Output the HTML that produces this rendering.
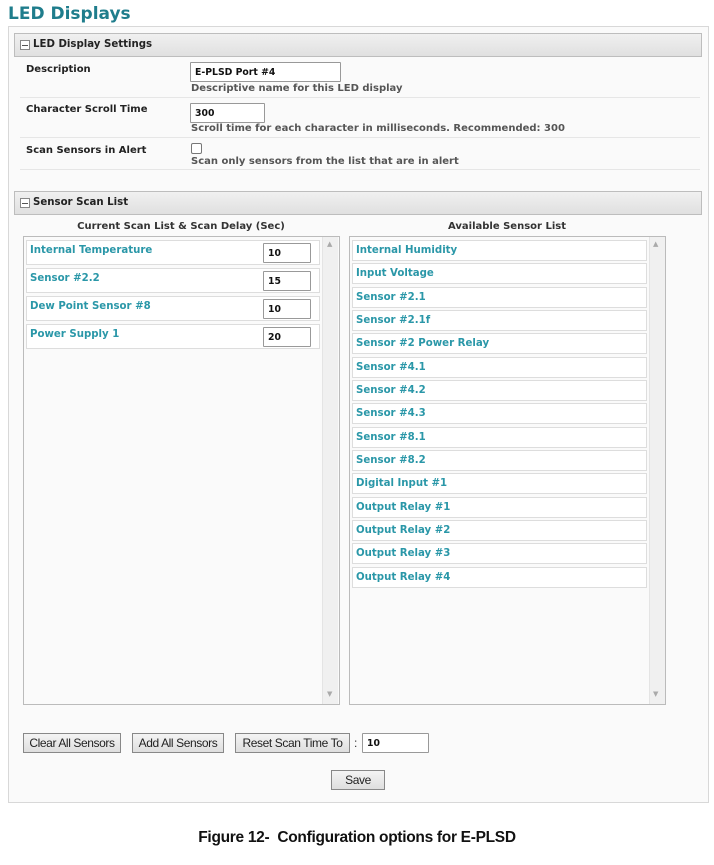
<!DOCTYPE html>
<html><head><meta charset="utf-8"><style>
*{box-sizing:border-box;margin:0;padding:0}
body{width:714px;height:865px;background:#fff;position:relative;font-family:"DejaVu Sans",Verdana,sans-serif;font-weight:bold;font-size:9.3px;color:#333;overflow:hidden}
.a{position:absolute}
.title{left:8px;top:4px;font-size:17px;color:#1f7d8c}
.outer{left:8px;top:26px;width:701px;height:777px;border:1px solid #d8d8d8;background:#fafafa}
.hdr{height:24px;left:14px;width:688px;border:1px solid #bdbdbd;background:linear-gradient(#f0f0f0,#e0e0e0);font-size:10.2px;color:#222;padding:5px 0 0 18px}
.hdr i{position:absolute;left:5px;top:6px;width:10px;height:10px;border:1px solid #888;background:#fff}
.hdr i:after{content:"";position:absolute;left:1px;right:1px;top:4px;height:1px;background:#555}
.lbl{left:26px;color:#222;font-size:10px}
.help{left:191px;color:#555;font-size:10px}
.inp{border:1px solid #999;background:#fff;height:20px;font-size:9.3px;padding:4px 0 0 4px;color:#111;border-radius:1px}
.sep{left:20px;width:680px;height:1px;background:#e6e6e6}
.box{border:1px solid #bbb;background:#fafafa}
.sb{width:16px;background:#f0f0f0;border-left:1px solid #e4e4e4}
.it{border:1px solid #ddd;background:#fff;color:#2a97a8;padding:4px 0 0 3px;font-size:10.2px}
.btn{border:1px solid #888;background:linear-gradient(#f4f4f4,#dedede);height:20px;font-family:"Liberation Sans",Arial,sans-serif;font-weight:normal;font-size:12px;color:#222;padding:2px 0 0 0;text-align:center;letter-spacing:-0.4px}
.arr{font-size:7px;color:#aaa;font-weight:normal}
</style></head><body>
<div class="a title">LED Displays</div>
<div class="a outer"></div>
<div class="a hdr" style="top:33px"><i></i>LED Display Settings</div>
<div class="a lbl" style="top:64px">Description</div>
<div class="a inp" style="left:190px;top:62px;width:151px">E-PLSD Port #4</div>
<div class="a help" style="top:83px">Descriptive name for this LED display</div>
<div class="a sep" style="top:97px"></div>
<div class="a lbl" style="top:104px">Character Scroll Time</div>
<div class="a inp" style="left:190px;top:103px;width:75px">300</div>
<div class="a help" style="top:123px">Scroll time for each character in milliseconds. Recommended: 300</div>
<div class="a sep" style="top:137px"></div>
<div class="a lbl" style="top:145px">Scan Sensors in Alert</div>
<div class="a" style="left:191px;top:143px;width:11px;height:11px;border:1px solid #777;border-radius:2px;background:#fff"></div>
<div class="a help" style="top:156px">Scan only sensors from the list that are in alert</div>
<div class="a sep" style="top:169px"></div>
<div class="a hdr" style="top:191px"><i></i>Sensor Scan List</div>
<div class="a" style="left:23px;width:316px;top:221px;text-align:center;color:#333;font-size:10px">Current Scan List &amp; Scan Delay (Sec)</div>
<div class="a" style="left:349px;width:316px;top:221px;text-align:center;color:#333;font-size:10px">Available Sensor List</div>
<div class="a box" style="left:23px;top:236px;width:317px;height:469px"></div>
<div class="a sb" style="left:322px;top:237px;height:467px"></div>
<div class="a arr" style="left:327px;top:240px">▲</div><div class="a arr" style="left:327px;top:690px">▼</div>
<div class="a box" style="left:349px;top:236px;width:317px;height:469px"></div>
<div class="a sb" style="left:649px;top:237px;height:467px"></div>
<div class="a arr" style="left:653px;top:240px">▲</div><div class="a arr" style="left:653px;top:690px">▼</div>

<div class="a it" style="left:26px;top:240px;width:294px;height:25px">Internal Temperature</div>
<div class="a inp" style="left:263px;top:243px;width:48px">10</div>
<div class="a it" style="left:26px;top:268px;width:294px;height:25px">Sensor #2.2</div>
<div class="a inp" style="left:263px;top:271px;width:48px">15</div>
<div class="a it" style="left:26px;top:296px;width:294px;height:25px">Dew Point Sensor #8</div>
<div class="a inp" style="left:263px;top:299px;width:48px">10</div>
<div class="a it" style="left:26px;top:324px;width:294px;height:25px">Power Supply 1</div>
<div class="a inp" style="left:263px;top:327px;width:48px">20</div>

<div class="a it" style="left:352px;top:240px;width:295px;height:21px">Internal Humidity</div>
<div class="a it" style="left:352px;top:263px;width:295px;height:21px">Input Voltage</div>
<div class="a it" style="left:352px;top:287px;width:295px;height:21px">Sensor #2.1</div>
<div class="a it" style="left:352px;top:310px;width:295px;height:21px">Sensor #2.1f</div>
<div class="a it" style="left:352px;top:333px;width:295px;height:21px">Sensor #2 Power Relay</div>
<div class="a it" style="left:352px;top:357px;width:295px;height:21px">Sensor #4.1</div>
<div class="a it" style="left:352px;top:380px;width:295px;height:21px">Sensor #4.2</div>
<div class="a it" style="left:352px;top:403px;width:295px;height:21px">Sensor #4.3</div>
<div class="a it" style="left:352px;top:427px;width:295px;height:21px">Sensor #8.1</div>
<div class="a it" style="left:352px;top:450px;width:295px;height:21px">Sensor #8.2</div>
<div class="a it" style="left:352px;top:473px;width:295px;height:21px">Digital Input #1</div>
<div class="a it" style="left:352px;top:497px;width:295px;height:21px">Output Relay #1</div>
<div class="a it" style="left:352px;top:520px;width:295px;height:21px">Output Relay #2</div>
<div class="a it" style="left:352px;top:543px;width:295px;height:21px">Output Relay #3</div>
<div class="a it" style="left:352px;top:567px;width:295px;height:21px">Output Relay #4</div>

<div class="a btn" style="left:23px;top:733px;width:98px">Clear All Sensors</div>
<div class="a btn" style="left:132px;top:733px;width:92px">Add All Sensors</div>
<div class="a btn" style="left:235px;top:733px;width:115px">Reset Scan Time To</div>
<div class="a" style="left:354px;top:736px;font-family:'Liberation Sans',Arial,sans-serif;font-weight:normal;font-size:12px">:</div>
<div class="a inp" style="left:362px;top:733px;width:67px;height:20px">10</div>
<div class="a btn" style="left:331px;top:770px;width:54px">Save</div>
<div class="a" style="left:0;width:714px;top:829px;text-align:center;font-family:'Liberation Sans',Arial,sans-serif;font-size:15.5px;color:#111;letter-spacing:-0.3px">Figure 12-&nbsp; Configuration options for E-PLSD</div>
</body></html>
